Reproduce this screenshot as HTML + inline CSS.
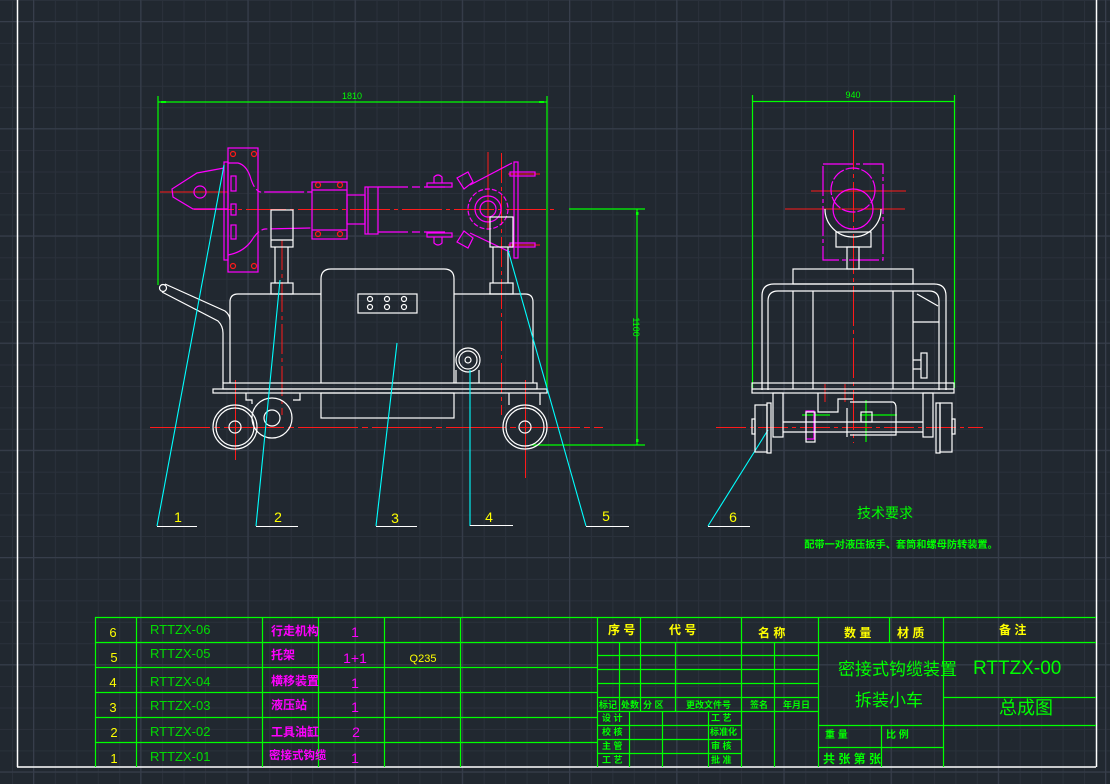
<!DOCTYPE html>
<html><head><meta charset="utf-8"><style>
html,body{margin:0;padding:0;background:#212830;width:1110px;height:784px;overflow:hidden}
svg{display:block}
text{font-family:"Liberation Sans","Noto Sans CJK SC",sans-serif}
.c{font-family:"Noto Sans CJK SC","WenQuanYi Zen Hei",sans-serif}
</style></head><body>
<svg width="1110" height="784" viewBox="0 0 1110 784" xmlns="http://www.w3.org/2000/svg">
<defs>
<pattern id="mg" x="12" y="0" width="21.44" height="21.44" patternUnits="userSpaceOnUse">
<path d="M0.5 0V21.44M0 0.5H21.44" stroke="#2a313b" stroke-width="1" fill="none"/>
</pattern>
<pattern id="MG" x="33" y="21" width="107.2" height="107.2" patternUnits="userSpaceOnUse">
<path d="M0.5 0V107.2M0 0.5H107.2" stroke="#373e4b" stroke-width="1.3" fill="none"/>
</pattern>
</defs>
<rect width="1110" height="784" fill="#212830"/>
<rect width="1110" height="784" fill="url(#mg)"/>
<rect width="1110" height="784" fill="url(#MG)"/>

<g stroke="#fff" stroke-width="1.5" fill="none">
<line x1="17.5" y1="0" x2="17.5" y2="767"/>
<line x1="17" y1="767" x2="1096" y2="767"/>
<line x1="1096.5" y1="0" x2="1096.5" y2="767"/>
</g>

<g stroke="#00ff00" stroke-width="1.2" fill="none">
<line x1="158" y1="96" x2="158" y2="285"/>
<line x1="547" y1="96" x2="547" y2="390"/>
<line x1="158" y1="102" x2="547" y2="102"/>
<line x1="569" y1="209" x2="645" y2="209"/>
<line x1="530" y1="445" x2="645" y2="445"/>
<line x1="637" y1="209" x2="637" y2="445"/>
</g>
<g fill="#00ff00"><rect x="161" y="101" width="5" height="2"/><rect x="539" y="101" width="5" height="2"/><rect x="636" y="212" width="2.5" height="3"/><rect x="636" y="439" width="2.5" height="3"/></g>
<text x="352" y="99" fill="#00ff00" font-size="9" text-anchor="middle">1810</text>
<text x="0" y="0" fill="#00ff00" font-size="9" text-anchor="middle" transform="translate(633,327) rotate(90)">1100</text>

<g stroke="#ff1a1a" stroke-width="1" fill="none">
<line x1="194" y1="209.5" x2="555" y2="209.5" stroke-dasharray="40 4 4 4"/>
<line x1="160" y1="192" x2="228" y2="192"/>
<line x1="488" y1="152" x2="488" y2="230"/>
<line x1="150" y1="427.5" x2="603" y2="427.5" stroke-dasharray="60 4 6 4"/>
<line x1="235.5" y1="380" x2="235.5" y2="460"/>
<line x1="525.5" y1="380" x2="525.5" y2="478"/>
<line x1="282" y1="240" x2="282" y2="415" stroke-dasharray="30 4 4 4"/>
<line x1="501.5" y1="153" x2="501.5" y2="415" stroke-dasharray="30 4 4 4"/>
<line x1="508" y1="174" x2="540" y2="174"/>
<line x1="508" y1="245" x2="540" y2="245"/>
</g>

<g stroke="#ff00ff" stroke-width="1.2" fill="none">
<rect x="228" y="148" width="30" height="124"/>
<rect x="224" y="162" width="4" height="98"/>
<path d="M224 168 L197 173 L172 189 L173 197 L193 209 L228 209"/>
<circle cx="200" cy="192" r="6"/>
<path d="M228 163 L238 163 Q246 165 250 176 Q254 190 260 192 L312 192" stroke-dasharray="40 3 6 3"/>
<path d="M228 255 Q244 252 252 240 Q258 230 265 229 L312 228" stroke-dasharray="40 3 6 3"/>
<rect x="231" y="176" width="5" height="15"/><rect x="231" y="204" width="5" height="11"/><rect x="231" y="225" width="5" height="14"/>
<rect x="312" y="182" width="35" height="57"/>
<line x1="312" y1="190" x2="347" y2="190"/><line x1="312" y1="230" x2="347" y2="230"/>
<rect x="347" y="195" width="18" height="29"/>
<rect x="365" y="187" width="13" height="47"/>
<line x1="368" y1="187" x2="368" y2="234"/>
<path d="M378 187 L445 187 M378 232 L445 232" stroke-dasharray="30 4 8 4"/>
<rect x="427" y="183" width="25" height="4"/>
<rect x="427" y="233" width="25" height="4"/>
<path d="M434 183 L434 177 Q438 173 442 177 L442 183"/>
<path d="M434 237 L434 243 Q438 247 442 243 L442 237"/>
<path d="M457 178 L468 172 L473 182 L464 189 Z"/>
<path d="M457 242 L468 248 L473 238 L464 231 Z"/>
<circle cx="488" cy="209" r="20" stroke-dasharray="5 2"/>
<circle cx="488" cy="209" r="13"/>
<circle cx="488" cy="209" r="8"/>
<path d="M470 185 L512 163 M470 233 L510 252"/>
<rect x="514" y="162" width="4" height="96"/>
<rect x="510" y="172" width="25" height="4"/>
<rect x="510" y="243" width="25" height="4"/>
</g>
<g stroke="#ff1a1a" stroke-width="1.2" fill="none">
<circle cx="233" cy="154" r="2.5"/><circle cx="254" cy="154" r="2.5"/>
<circle cx="233" cy="266" r="2.5"/><circle cx="254" cy="266" r="2.5"/>
<circle cx="318" cy="185" r="2.5"/><circle cx="340" cy="185" r="2.5"/>
<circle cx="318" cy="234" r="2.5"/><circle cx="340" cy="234" r="2.5"/>
</g>

<g stroke="#ffffff" stroke-width="1.2" fill="none">
<rect x="271" y="210" width="22" height="37"/>
<line x1="271" y1="240" x2="293" y2="240"/>
<line x1="275" y1="247" x2="275" y2="283"/><line x1="288" y1="247" x2="288" y2="283"/>
<rect x="271" y="283" width="22" height="11"/>
<rect x="490" y="217" width="23" height="30"/>
<line x1="493" y1="247" x2="493" y2="283"/><line x1="508" y1="247" x2="508" y2="283"/>
<rect x="490" y="283" width="23" height="11"/>
<path d="M321 383 L321 279 Q321 269 331 269 L444 269 Q454 269 454 279 L454 383"/>
<path d="M230 383 L230 302 Q230 294 238 294 L321 294 M454 294 L525 294 Q533 294 533 302 L533 383"/>
<rect x="358" y="294" width="59" height="19"/>
<circle cx="370" cy="299" r="2.5"/><circle cx="387" cy="299" r="2.5"/><circle cx="404" cy="299" r="2.5"/>
<circle cx="370" cy="307" r="2.5"/><circle cx="387" cy="307" r="2.5"/><circle cx="404" cy="307" r="2.5"/>
<rect x="223" y="383" width="314" height="6"/>
<rect x="213" y="389" width="334" height="4"/>
<rect x="321" y="393" width="133" height="25"/>
<circle cx="163" cy="288" r="3.5"/>
<path d="M165 284 L225 311 Q230 315 230 320"/>
<path d="M162 292 L218 321 Q223 326 223 333 L223 383"/>
<circle cx="235" cy="427" r="22"/><circle cx="235" cy="427" r="19"/><circle cx="235" cy="427" r="6"/>
<circle cx="272" cy="418" r="20"/><circle cx="272" cy="418" r="8"/>
<path d="M246 393 L246 400 L252 400 L252 404 M300 393 L300 400 L293 400"/>
<circle cx="525" cy="427" r="22"/><circle cx="525" cy="427" r="19"/><circle cx="525" cy="427" r="6"/>
<path d="M509 393 L509 405 M540 393 L540 405"/>
<circle cx="468" cy="360" r="12"/><circle cx="468" cy="360" r="9"/><circle cx="468" cy="360" r="3"/>
<path d="M456 370 L456 383 M479 370 L479 383"/>
</g>

<g stroke="#00ffff" stroke-width="1.1" fill="none">
<path d="M224 165 L157 526"/>
<path d="M280 280 L256 526"/>
<path d="M397 343 L376 526"/>
<path d="M470 370 L470 526"/>
<path d="M508 250 L586 526"/>
<path d="M768 430 L708 526"/>
</g>
<g stroke="#ffffff" stroke-width="1.1">
<line x1="157" y1="526.5" x2="197" y2="526.5"/>
<line x1="256" y1="526.5" x2="298" y2="526.5"/>
<line x1="376" y1="526.5" x2="417" y2="526.5"/>
<line x1="470" y1="525.5" x2="513" y2="525.5"/>
<line x1="586" y1="526.5" x2="629" y2="526.5"/>
<line x1="708" y1="526.5" x2="750" y2="526.5"/>
</g>
<g fill="#ffff00" font-size="14" text-anchor="middle">
<text x="178" y="522">1</text><text x="278" y="522">2</text><text x="395" y="523">3</text>
<text x="489" y="522">4</text><text x="606" y="521">5</text><text x="733" y="522">6</text>
</g>

<g stroke="#00ff00" stroke-width="1.2" fill="none">
<line x1="752.5" y1="95" x2="752.5" y2="388"/>
<line x1="954.5" y1="95" x2="954.5" y2="388"/>
<line x1="752" y1="101.5" x2="954" y2="101.5"/>
<line x1="802" y1="415" x2="830" y2="415"/><line x1="860" y1="415" x2="897" y2="415"/>
<line x1="866" y1="400" x2="866" y2="442"/>
</g>
<text x="853" y="98" fill="#00ff00" font-size="9" text-anchor="middle">940</text>
<g stroke="#ff1a1a" stroke-width="1" fill="none">
<line x1="853.5" y1="130" x2="853.5" y2="443" stroke-dasharray="40 4 4 4"/>
<line x1="811" y1="191" x2="906" y2="191"/>
<line x1="785" y1="209" x2="905" y2="209"/>
<line x1="716" y1="427.5" x2="983" y2="427.5" stroke-dasharray="30 4 4 4"/>
<line x1="825" y1="384" x2="825" y2="402"/><line x1="845" y1="384" x2="845" y2="402"/>
</g>
<g stroke="#ff00ff" stroke-width="1.2" fill="none">
<rect x="823" y="164" width="60" height="96" stroke-dasharray="30 3 4 3"/>
<circle cx="853" cy="190" r="22" stroke-dasharray="14 2"/>
<circle cx="853" cy="209" r="20"/>
<rect x="806" y="411" width="8" height="28"/>
</g>
<g stroke="#ffffff" stroke-width="1.2" fill="none">
<path d="M825 209 A28 28 0 0 0 881 209"/>
<rect x="836" y="232" width="35" height="15"/>
<rect x="847" y="247" width="12" height="22"/>
<rect x="793" y="269" width="120" height="15"/>
<path d="M762 390 L762 296 Q762 284 774 284 L934 284 Q946 284 946 296 L946 390"/>
<path d="M768 390 L768 301 Q768 291 778 291 L929 291 Q939 291 939 301 L939 390"/>
<line x1="793" y1="291" x2="793" y2="389"/><line x1="813" y1="291" x2="813" y2="389"/>
<line x1="893" y1="291" x2="893" y2="389"/><line x1="913" y1="291" x2="913" y2="389"/>
<line x1="913" y1="322" x2="939" y2="322"/>
<rect x="921" y="353" width="6" height="25"/><line x1="913" y1="360" x2="921" y2="360"/><line x1="913" y1="369" x2="921" y2="369"/>
<path d="M917 294 L938 306"/>
<rect x="752" y="383" width="202" height="10"/>
<line x1="752" y1="389" x2="954" y2="389"/>
<rect x="773" y="393" width="10" height="44"/>
<rect x="923" y="393" width="10" height="44"/>
<rect x="755" y="405" width="12" height="47"/><rect x="767" y="403" width="4" height="50"/>
<rect x="940" y="403" width="12" height="49"/><rect x="936" y="403" width="4" height="50"/>
<rect x="752" y="419" width="3" height="15"/><rect x="952" y="419" width="3" height="15"/>
<line x1="783" y1="422" x2="923" y2="422"/><line x1="783" y1="432" x2="923" y2="432"/>
<path d="M818 393 L818 412 L838 412 L838 399 L853 399 M847 408 L847 437"/>
<path d="M850 402 L893 402 Q896 403 896 408 L896 435 L850 435"/>
<rect x="861" y="412" width="11" height="10"/>
<rect x="806" y="412" width="9" height="30"/>
</g>

<text x="885" y="518" class="c" fill="#00ff00" font-size="14" text-anchor="middle">技术要求</text>
<text x="901" y="548" class="c" fill="#00ff00" font-size="10.2" text-anchor="middle" font-weight="bold">配带一对液压扳手、套筒和螺母防转装置。</text>

<g stroke="#00ff00" stroke-width="1.2" fill="none">
<line x1="95" y1="617.5" x2="1096" y2="617.5"/>
<line x1="95" y1="642.5" x2="597" y2="642.5"/>
<line x1="95" y1="667.5" x2="597" y2="667.5"/>
<line x1="95" y1="692.5" x2="597" y2="692.5"/>
<line x1="95" y1="717.5" x2="597" y2="717.5"/>
<line x1="95" y1="742.5" x2="597" y2="742.5"/>
<line x1="95.5" y1="617" x2="95.5" y2="767"/>
<line x1="136.5" y1="617" x2="136.5" y2="767"/>
<line x1="262.5" y1="617" x2="262.5" y2="767"/>
<line x1="318.5" y1="617" x2="318.5" y2="767"/>
<line x1="384.5" y1="617" x2="384.5" y2="767"/>
<line x1="460.5" y1="617" x2="460.5" y2="767"/>
<line x1="597.5" y1="617" x2="597.5" y2="767"/>
</g>
<g fill="#ffff00" font-size="13" text-anchor="middle">
<text x="113" y="637">6</text><text x="114" y="662">5</text><text x="113" y="687">4</text>
<text x="113" y="712">3</text><text x="114" y="737">2</text><text x="114" y="763">1</text>
<text x="423" y="662" font-size="11">Q235</text>
</g>
<g fill="#00dd00" font-size="13">
<text x="150" y="634">RTTZX-06</text><text x="150" y="658">RTTZX-05</text><text x="150" y="686">RTTZX-04</text>
<text x="150" y="710">RTTZX-03</text><text x="150" y="736">RTTZX-02</text><text x="150" y="761">RTTZX-01</text>
</g>
<g fill="#ff00ff" font-size="12" class="c" font-weight="bold">
<text x="271" y="635">行走机构</text><text x="271" y="659">托架</text><text x="271" y="685">横移装置</text>
<text x="271" y="709">液压站</text><text x="271" y="736">工具油缸</text><text x="269" y="759" font-size="11.5">密接式钩缆</text>
</g>
<g fill="#ff00ff" font-size="14" text-anchor="middle">
<text x="355" y="637">1</text><text x="355" y="663">1+1</text><text x="355" y="688">1</text>
<text x="355" y="712">1</text><text x="356" y="737">2</text><text x="355" y="763">1</text>
</g>

<g stroke="#00ff00" stroke-width="1.2" fill="none">
<line x1="597" y1="642.5" x2="1096" y2="642.5"/>
<line x1="597" y1="655.5" x2="818" y2="655.5"/>
<line x1="597" y1="669.5" x2="818" y2="669.5"/>
<line x1="597" y1="683.5" x2="818" y2="683.5"/>
<line x1="597" y1="697.5" x2="818" y2="697.5"/>
<line x1="597" y1="711.5" x2="818" y2="711.5"/>
<line x1="597" y1="725.5" x2="741" y2="725.5"/>
<line x1="597" y1="739.5" x2="741" y2="739.5"/>
<line x1="597" y1="753.5" x2="741" y2="753.5"/>
<line x1="640.5" y1="617" x2="640.5" y2="711"/>
<line x1="619.5" y1="642" x2="619.5" y2="711"/>
<line x1="675.5" y1="642" x2="675.5" y2="711"/>
<line x1="741.5" y1="617" x2="741.5" y2="767"/>
<line x1="774.5" y1="642" x2="774.5" y2="767"/>
<line x1="818.5" y1="617" x2="818.5" y2="767"/>
<line x1="629.5" y1="711" x2="629.5" y2="767"/>
<line x1="662.5" y1="711" x2="662.5" y2="767"/>
<line x1="708.5" y1="711" x2="708.5" y2="767"/>
<line x1="889.5" y1="617" x2="889.5" y2="642"/>
<line x1="943.5" y1="617" x2="943.5" y2="767"/>
<line x1="943" y1="697.5" x2="1096" y2="697.5"/>
<line x1="818" y1="725.5" x2="1096" y2="725.5"/>
<line x1="818" y1="747.5" x2="943" y2="747.5"/>
<line x1="881.5" y1="725" x2="881.5" y2="767"/>
</g>
<g fill="#ffff00" font-size="12" class="c" font-weight="bold">
<text x="608" y="634">序 号</text><text x="669" y="634">代 号</text><text x="758" y="637">名  称</text>
<text x="844" y="637">数 量</text><text x="897" y="637">材 质</text><text x="999" y="634">备 注</text>
</g>
<g fill="#00ff00" font-size="9" class="c" font-weight="bold">
<text x="599" y="708">标记</text><text x="621" y="708">处数</text><text x="643" y="708">分 区</text><text x="686" y="708">更改文件号</text><text x="750" y="708">签名</text><text x="783" y="708">年月日</text>
<text x="602" y="721">设 计</text><text x="602" y="735">校 核</text><text x="602" y="749">主 管</text><text x="602" y="763">工 艺</text>
<text x="711" y="721">工 艺</text><text x="710" y="735">标准化</text><text x="711" y="749">审 核</text><text x="711" y="763">批 准</text>
<text x="825" y="738" font-size="10">重 量</text><text x="886" y="738" font-size="10">比 例</text>
<text x="823" y="763" font-size="12">共  张   第   张</text>
</g>
<g fill="#00ff00" class="c">
<text x="838" y="675" font-size="17">密接式钩缆装置</text>
<text x="855" y="706" font-size="17">拆装小车</text>
<text x="1026" y="714" font-size="18" text-anchor="middle">总成图</text>
</g>
<text x="973" y="674" fill="#00ff00" font-size="19">RTTZX-00</text>
</svg>
</body></html>
